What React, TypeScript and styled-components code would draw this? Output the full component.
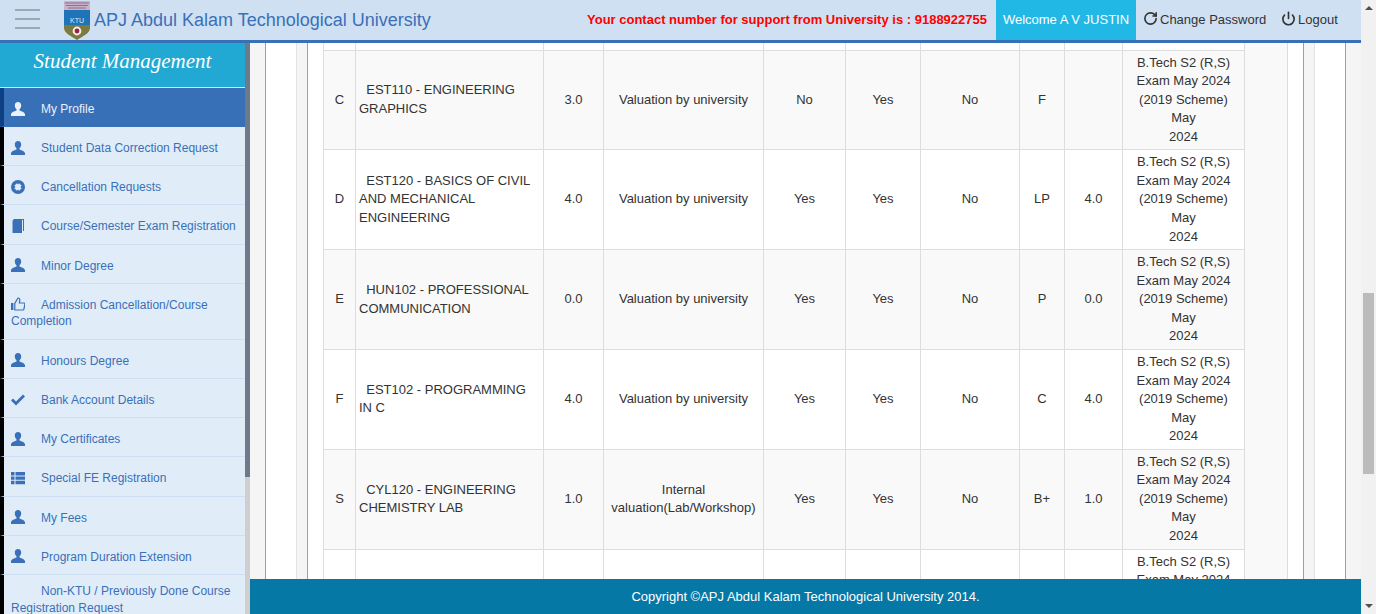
import React from "react";
import styled, { createGlobalStyle } from "styled-components";
import { Power, RotateCw } from "lucide-react";

const GlobalStyle = createGlobalStyle`
  html, body {
    margin: 0;
    padding: 0;
    height: 100%;
    overflow: hidden;
    font-family: "Liberation Sans", Arial, sans-serif;
    font-size: 13px;
    line-height: 1.42857;
    color: #333;
  }
  * {
    box-sizing: border-box;
  }
`;

const Shell = styled.div`
  display: flex;
  width: 1376px;
  height: 614px;
`;

const Page = styled.div`
  flex: 1;
  min-width: 0;
  display: flex;
  flex-direction: column;
`;

const Header = styled.header`
  flex: none;
  height: 43px;
  display: flex;
  align-items: stretch;
  background: #cfe0f3;
  border-bottom: 3px solid #3870b8;
`;

const Burger = styled.div`
  flex: none;
  width: 25px;
  margin-left: 15px;
  padding-top: 9px;
  display: flex;
  flex-direction: column;
  gap: 7px;
`;

const BurgerBar = styled.span`
  display: block;
  height: 2px;
  background: #9aa9b8;
`;

const LogoWrap = styled.div`
  flex: none;
  margin-left: 24px;
  padding-top: 1px;
  width: 26px;
`;

const Title = styled.div`
  margin-left: 4px;
  font-size: 18px;
  line-height: 40px;
  color: #3a70b8;
  white-space: nowrap;
`;

const Support = styled.div`
  margin-left: auto;
  font-weight: bold;
  line-height: 40px;
  color: #f00;
  white-space: nowrap;
`;

const Welcome = styled.div`
  margin-left: 9px;
  width: 140px;
  text-align: center;
  line-height: 40px;
  color: #fff;
  background: #22b8e6;
`;

const HeaderLink = styled.a<{ $width: number }>`
  width: ${({ $width }) => $width}px;
  padding-left: 7px;
  display: flex;
  align-items: center;
  gap: 2px;
  color: #333;
  white-space: nowrap;
  svg {
    flex: none;
    margin-top: -3px;
  }
`;

const Body = styled.div`
  flex: 1;
  min-height: 0;
  display: flex;
`;

const Sidebar = styled.aside`
  flex: none;
  width: 250px;
  display: flex;
  overflow: hidden;
`;

const SideMenu = styled.nav`
  width: 245px;
  background: #e0edf9;
  overflow: hidden;
`;

const SideTitle = styled.div`
  height: 45px;
  text-align: center;
  font-family: "Liberation Serif", "Times New Roman", serif;
  font-style: italic;
  font-size: 21px;
  line-height: 36px;
  color: #fff;
  background: #22a9d3;
  border-bottom: 1px solid #d6ecf6;
`;

const MenuItem = styled.a<{ $active?: boolean }>`
  display: block;
  padding: 8px 8px 8.5px 7px;
  font-size: 12px;
  color: ${({ $active }) => ($active ? "#eaf1fa" : "#3a70b8")};
  background: ${({ $active }) => ($active ? "#3870b8" : "#e0edf9")};
  border-left: 4px solid ${({ $active }) => ($active ? "#0d3f84" : "#000")};
  border-bottom: 1px solid ${({ $active }) => ($active ? "#3870b8" : "#cfe0f3")};
`;

const MenuIcon = styled.svg`
  display: inline-block;
  width: 14px;
  height: 14px;
  margin: 5.5px 16px 0 0;
  vertical-align: -3px;
  fill: currentColor;
`;

const MenuIndent = styled.span`
  display: inline-block;
  width: 30px;
`;

const SideScroll = styled.div`
  width: 5px;
  background: #cfcfcf;
`;

const SideThumb = styled.div`
  height: 434px;
  background: #6c7a89;
`;

const Main = styled.main`
  flex: 1;
  min-width: 0;
  display: flex;
  flex-direction: column;
`;

const Content = styled.div`
  flex: 1;
  min-height: 0;
  overflow: hidden;
  display: flex;
  justify-content: center;
  background: #f5f5f5;
`;

const OuterPanel = styled.div`
  width: 1081px;
  padding: 0 30px;
  background: #fff;
  border-left: 1px solid #7aa6e0;
  border-right: 1px solid #7aa6e0;
`;

const Well = styled.div`
  height: 100%;
  padding: 0 10px;
  background: #f5f5f5;
  border-left: 1px solid #e3e3e3;
  border-right: 1px solid #e3e3e3;
`;

const InnerPanel = styled.div`
  height: 100%;
  padding: 0 15px;
  background: #fff;
  border-left: 1px solid #7aa6e0;
  border-right: 1px solid #7aa6e0;
`;

const TableWrap = styled.div`
  height: 100%;
  overflow: hidden;
  background: #f9f9f9;
  border-right: 1px solid #ddd;
`;

const ResultTable = styled.table`
  width: 922px;
  margin-top: -93.3px;
  table-layout: fixed;
  border-collapse: collapse;
  background: #fff;
`;

const Row = styled.tr<{ $striped?: boolean }>`
  background: ${({ $striped }) => ($striped ? "#f9f9f9" : "#fff")};
`;

const Cell = styled.td<{ $left?: boolean }>`
  padding: 3px;
  border: 1px solid #ddd;
  text-align: ${({ $left }) => ($left ? "left" : "center")};
  vertical-align: middle;
  color: #333;
`;

const Footer = styled.footer`
  flex: none;
  height: 35px;
  line-height: 35px;
  text-align: center;
  color: #fff;
  background: #0678a6;
`;

const PageScroll = styled.div`
  flex: none;
  width: 15px;
  display: flex;
  flex-direction: column;
  align-items: center;
  background: #f1f1f1;
`;

const ArrowUp = styled.span`
  margin-top: 6px;
  border-left: 4px solid transparent;
  border-right: 4px solid transparent;
  border-bottom: 4px solid #505050;
`;

const ArrowDown = styled.span`
  margin-bottom: 6px;
  border-left: 4px solid transparent;
  border-right: 4px solid transparent;
  border-top: 4px solid #505050;
`;

const PageThumb = styled.div`
  width: 11px;
  height: 181px;
  margin: 283px 0 auto;
  background: #bbb;
`;

const UserIcon = () => (
  <MenuIcon viewBox="0 0 14 14">
    <path d="M7 0C5 0 3.8 1.5 3.8 3.4c0 1.5.7 3 1.7 3.8v1.4C4 9.3.2 10 0 12.6V14h14v-1.4c-.2-2.6-4-3.3-5.5-4V7.2c1-.8 1.7-2.3 1.7-3.8C10.2 1.5 9 0 7 0z" />
  </MenuIcon>
);

const CancelIcon = () => (
  <MenuIcon viewBox="0 0 14 14">
    <circle cx="7" cy="7" r="7" />
    <path d="M4.6 4.6l4.8 4.8M9.4 4.6L4.6 9.4" stroke="#e0edf9" strokeWidth="3.6" />
  </MenuIcon>
);

const BookIcon = () => (
  <MenuIcon viewBox="0 0 14 14">
    <path d="M2.5 0H13v12h-1V1H2.5z" />
    <path d="M1.5 1.6L2.5 1H11v13H1.5z" />
  </MenuIcon>
);

const ThumbIcon = () => (
  <MenuIcon viewBox="0 0 14 14">
    <rect x="0" y="6" width="2.4" height="7" />
    <path
      d="M3.8 6.4L7 1c1.3 0 2 .9 1.8 2.2L8.4 6H13c.6 0 1 .5.9 1l-1 5.2c-.1.5-.5.8-1 .8H3.8z"
      fill="none"
      stroke="currentColor"
      strokeWidth="1.2"
    />
  </MenuIcon>
);

const CheckIcon = () => (
  <MenuIcon viewBox="0 0 14 14">
    <path d="M0 7.6l2-2 3 3L12 1.6l2 2-9 9z" />
  </MenuIcon>
);

const ListIcon = () => (
  <MenuIcon viewBox="0 0 14 14">
    <path d="M0 1h3.5v3.4H0zM4.5 1H14v3.4H4.5zM0 5.4h3.5v3.4H0zM4.5 5.4H14v3.4H4.5zM0 9.8h3.5v3.4H0zM4.5 9.8H14v3.4H4.5z" />
  </MenuIcon>
);

const Logo = () => (
  <svg width="26" height="39" viewBox="0 0 26 39">
    <rect x="0" y="0" width="26" height="9" fill="#c9b3c6" />
    <path d="M1 2h24M2 4.5h22M4 7h18" stroke="#8d6d92" strokeWidth="1" />
    <rect x="0" y="9" width="26" height="15" fill="#1f74b8" />
    <text x="13" y="22" textAnchor="middle" fontSize="7" fill="#dcebf7" fontFamily="Liberation Sans">
      KTU
    </text>
    <path d="M0 24h26v3c0 5-7 8-13 12C7 35 0 32 0 27z" fill="#7d7a3c" />
    <circle cx="13" cy="30" r="4.4" fill="#f3ece6" />
    <circle cx="13" cy="30" r="2.4" fill="#98204f" />
  </svg>
);

const menu: { label: string; icon?: React.ReactNode; active?: boolean }[] = [
  { label: "My Profile", icon: <UserIcon />, active: true },
  { label: "Student Data Correction Request", icon: <UserIcon /> },
  { label: "Cancellation Requests", icon: <CancelIcon /> },
  { label: "Course/Semester Exam Registration", icon: <BookIcon /> },
  { label: "Minor Degree", icon: <UserIcon /> },
  { label: "Admission Cancellation/Course Completion", icon: <ThumbIcon /> },
  { label: "Honours Degree", icon: <UserIcon /> },
  { label: "Bank Account Details", icon: <CheckIcon /> },
  { label: "My Certificates", icon: <UserIcon /> },
  { label: "Special FE Registration", icon: <ListIcon /> },
  { label: "My Fees", icon: <UserIcon /> },
  { label: "Program Duration Extension", icon: <UserIcon /> },
  { label: "Non-KTU / Previously Done Course Registration Request" },
];

const columns = [32, 188, 60, 160, 82, 75, 99, 45, 58, 122];

const rows = [
  { slot: "B", course: "MAT102 - VECTOR CALCULUS", credit: "4.0", mode: "Valuation by university", a: "Yes", b: "Yes", c: "No", grade: "B", earned: "4.0" },
  { slot: "C", course: "EST110 - ENGINEERING GRAPHICS", credit: "3.0", mode: "Valuation by university", a: "No", b: "Yes", c: "No", grade: "F", earned: "" },
  { slot: "D", course: "EST120 - BASICS OF CIVIL AND MECHANICAL ENGINEERING", credit: "4.0", mode: "Valuation by university", a: "Yes", b: "Yes", c: "No", grade: "LP", earned: "4.0" },
  { slot: "E", course: "HUN102 - PROFESSIONAL COMMUNICATION", credit: "0.0", mode: "Valuation by university", a: "Yes", b: "Yes", c: "No", grade: "P", earned: "0.0" },
  { slot: "F", course: "EST102 - PROGRAMMING IN C", credit: "4.0", mode: "Valuation by university", a: "Yes", b: "Yes", c: "No", grade: "C", earned: "4.0" },
  { slot: "S", course: "CYL120 - ENGINEERING CHEMISTRY LAB", credit: "1.0", mode: "Internal valuation(Lab/Workshop)", a: "Yes", b: "Yes", c: "No", grade: "B+", earned: "1.0" },
  { slot: "T", course: "ESL120 - CIVIL AND MECHANICAL WORKSHOP", credit: "1.0", mode: "Internal valuation(Lab/Workshop)", a: "Yes", b: "Yes", c: "No", grade: "A", earned: "1.0" },
];

const App = () => {
  return (
    <Shell>
      <GlobalStyle />
      <Page>
        <Header>
          <Burger>
            <BurgerBar />
            <BurgerBar />
            <BurgerBar />
          </Burger>
          <LogoWrap>
            <Logo />
          </LogoWrap>
          <Title>APJ Abdul Kalam Technological University</Title>
          <Support>Your contact number for support from University is : 9188922755</Support>
          <Welcome>Welcome A V JUSTIN</Welcome>
          <HeaderLink $width={138}>
            <RotateCw size={15} strokeWidth={2.6} />
            Change Password
          </HeaderLink>
          <HeaderLink $width={87}>
            <Power size={15} strokeWidth={2.6} />
            Logout
          </HeaderLink>
        </Header>
        <Body>
          <Sidebar>
            <SideMenu>
              <SideTitle>Student Management</SideTitle>
              {menu.map((item) => (
                <MenuItem key={item.label} $active={item.active}>
                  {item.icon ?? <MenuIndent />}
                  {item.label}
                </MenuItem>
              ))}
            </SideMenu>
            <SideScroll>
              <SideThumb />
            </SideScroll>
          </Sidebar>
          <Main>
            <Content>
              <OuterPanel>
                <Well>
                  <InnerPanel>
                    <TableWrap>
                      <ResultTable>
                        <colgroup>
                          {columns.map((w, idx) => (
                            <col key={`col-${idx}`} style={{ width: w }} />
                          ))}
                        </colgroup>
                        <tbody>
                          {rows.map((r, idx) => (
                            <Row key={r.slot} $striped={idx % 2 === 1}>
                              <Cell>{r.slot}</Cell>
                              <Cell $left>
                                {"\u00a0\u00a0"}
                                {r.course}
                              </Cell>
                              <Cell>{r.credit}</Cell>
                              <Cell>{r.mode}</Cell>
                              <Cell>{r.a}</Cell>
                              <Cell>{r.b}</Cell>
                              <Cell>{r.c}</Cell>
                              <Cell>{r.grade}</Cell>
                              <Cell>{r.earned}</Cell>
                              <Cell>
                                B.Tech S2 (R,S) Exam May 2024 (2019 Scheme) May
                                <br />
                                2024
                              </Cell>
                            </Row>
                          ))}
                        </tbody>
                      </ResultTable>
                    </TableWrap>
                  </InnerPanel>
                </Well>
              </OuterPanel>
            </Content>
            <Footer>Copyright ©APJ Abdul Kalam Technological University 2014.</Footer>
          </Main>
        </Body>
      </Page>
      <PageScroll>
        <ArrowUp />
        <PageThumb />
        <ArrowDown />
      </PageScroll>
    </Shell>
  );
};

export default App;
